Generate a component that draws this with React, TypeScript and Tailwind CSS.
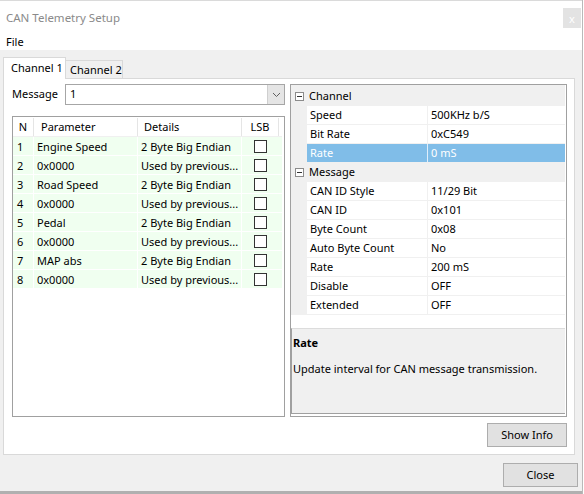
import React from 'react'

const rows = [
  { n: 1, name: 'Engine Speed', det: '2 Byte Big Endian' },
  { n: 2, name: '0x0000', det: 'Used by previous...' },
  { n: 3, name: 'Road Speed', det: '2 Byte Big Endian' },
  { n: 4, name: '0x0000', det: 'Used by previous...' },
  { n: 5, name: 'Pedal', det: '2 Byte Big Endian' },
  { n: 6, name: '0x0000', det: 'Used by previous...' },
  { n: 7, name: 'MAP abs', det: '2 Byte Big Endian' },
  { n: 8, name: '0x0000', det: 'Used by previous...' },
]

type Prop = { label: string; value: string; selected?: boolean }

const groups: { title: string; props: Prop[] }[] = [
  {
    title: 'Channel',
    props: [
      { label: 'Speed', value: '500KHz b/S' },
      { label: 'Bit Rate', value: '0xC549' },
      { label: 'Rate', value: '0 mS', selected: true },
    ],
  },
  {
    title: 'Message',
    props: [
      { label: 'CAN ID Style', value: '11/29 Bit' },
      { label: 'CAN ID', value: '0x101' },
      { label: 'Byte Count', value: '0x08' },
      { label: 'Auto Byte Count', value: 'No' },
      { label: 'Rate', value: '200 mS' },
      { label: 'Disable', value: 'OFF' },
      { label: 'Extended', value: 'OFF' },
    ],
  },
]

function MinusBox() {
  return (
    <svg width="9" height="9" viewBox="0 0 9 9" className="block">
      <rect x="0.5" y="0.5" width="8" height="8" fill="#fff" stroke="#8c8c8c" />
      <line x1="2" y1="4.5" x2="7" y2="4.5" stroke="#333" />
    </svg>
  )
}

function Button({ label, className }: { label: string; className?: string }) {
  return (
    <div
      className={
        'flex items-center justify-center h-[24px] bg-[#e1e1e1] border border-[#adadad] text-black ' +
        (className ?? '')
      }
    >
      {label}
    </div>
  )
}

export default function App() {
  return (
    <div
      className="w-[584px] h-[494px] bg-white overflow-hidden text-[11px] text-black whitespace-nowrap"
      style={{ fontFamily: '"Noto Sans", "Segoe UI", sans-serif' }}
    >
      <div className="w-[583px] h-[494px] flex flex-col border-r border-[#b9b9b9]">
        {/* Title bar */}
        <div className="h-[32px] bg-white border-t border-[#dadada] flex items-start justify-between">
          <div className="pl-[6px] pt-[8px] text-[#8a8a8a] text-[11.5px]">CAN Telemetry Setup</div>
          <div className="mt-[7px] mr-[1px] w-[18px] h-[20px] bg-[#e3e3e3] flex items-center justify-center text-white text-[11px] leading-none">
            x
          </div>
        </div>

        {/* Menu */}
        <div className="h-[18px] bg-white flex items-center pl-[6px] leading-none">File</div>

        {/* Body */}
        <div className="flex-1 bg-[#f0f0f0] flex flex-col pl-[3px] pr-[7px] pt-[7px]">
          {/* Tabs */}
          <div className="flex items-end h-[21px] relative z-10">
            <div className="w-[63px] h-[22px] bg-white border border-b-0 border-[#d9d9d9] flex items-center pl-[7px] -mb-[1px]">
              Channel 1
            </div>
            <div className="w-[57px] h-[18px] bg-[#f0f0f0] border border-l-0 border-b-0 border-[#d9d9d9] flex items-center pl-[4px] pt-[1px]">
              Channel 2
            </div>
          </div>

          {/* Tab panel */}
          <div className="h-[377px] bg-white border border-[#d9d9d9] flex flex-col pl-[8px] pr-[7px] pt-[5px]">
            <div className="flex gap-[5px]">
              {/* Left column */}
              <div className="w-[273px] flex flex-col">
                <div className="flex items-center h-[21px]">
                  <div className="w-[53px]">Message</div>
                  <div className="flex-1 h-[21px] border border-[#a6a6a6] flex items-stretch">
                    <div className="flex-1 flex items-center pl-[4px]">1</div>
                    <div className="w-[17px] bg-[#e5e5e5] border-l border-[#cfcfcf] flex items-center justify-center">
                      <svg width="9" height="6" viewBox="0 0 9 6">
                        <path d="M1 1 L4.5 4.5 L8 1" fill="none" stroke="#606060" strokeWidth="1" />
                      </svg>
                    </div>
                  </div>
                </div>

                {/* Grid */}
                <div className="mt-[11px] h-[301px] border border-[#a0a0a0] bg-white pr-[2px]">
                  <div className="flex h-[20px] border-b border-[#f0f0f0] pt-[1px]">
                    <div className="w-[21px] border-r border-[#e5e5e5] flex items-center justify-center">N</div>
                    <div className="w-[104px] border-r border-[#e5e5e5] flex items-center pl-[7px]">Parameter</div>
                    <div className="w-[104px] border-r border-[#e5e5e5] flex items-center pl-[6px]">Details</div>
                    <div className="w-[37px] border-r border-[#e5e5e5] flex items-center justify-center">LSB</div>
                  </div>
                  {rows.map((r) => (
                    <div key={r.n} className="flex h-[19px] border-b border-white bg-[#f0fff0]">
                      <div className="w-[21px] border-r border-white flex items-center pl-[4px] pt-[2px]">{r.n}</div>
                      <div className="w-[104px] border-r border-white flex items-center pl-[3px] pt-[2px]">{r.name}</div>
                      <div className="w-[104px] border-r border-white flex items-center pl-[3px] pt-[2px] overflow-hidden">
                        {r.det}
                      </div>
                      <div className="w-[37px] flex items-center justify-center">
                        <div className="w-[13px] h-[13px] border border-[#333] bg-white" />
                      </div>
                      <div className="flex-1" />
                    </div>
                  ))}
                </div>
              </div>

              {/* Property grid */}
              <div className="w-[277px] h-[333px] border border-[#a0a0a0] bg-white flex flex-col pr-[1px]">
                <div className="bg-[#f0f0f0] pt-[2px]">
                  {groups.map((g) => (
                    <div key={g.title}>
                      <div className="h-[19px] flex items-center border-b border-[#f0f0f0]">
                        <div className="w-[16px] flex items-center justify-center pl-[1px]">
                          <MinusBox />
                        </div>
                        <div className="pl-[2px]">{g.title}</div>
                      </div>
                      {g.props.map((p, i) => (
                        <div key={i} className="h-[19px] flex pl-[16px] border-b border-[#f0f0f0]">
                          <div
                            className={
                              'w-[121px] flex items-center pl-[3px] border-r ' +
                              (p.selected ? 'bg-[#80bde8] text-white border-[#dfeefb]' : 'bg-white border-[#f0f0f0]')
                            }
                          >
                            {p.label}
                          </div>
                          <div
                            className={
                              'flex-1 flex items-center pl-[3px] ' +
                              (p.selected ? 'bg-[#80bde8] text-white' : 'bg-white')
                            }
                          >
                            {p.value}
                          </div>
                        </div>
                      ))}
                    </div>
                  ))}
                </div>
                <div className="mt-auto mb-[2px] h-[86px] bg-[#f0f0f0] border-t border-[#dcdcdc] border-l border-l-[#a0a0a0] border-b border-b-[#a0a0a0] pl-[1px] pt-[5px]">
                  <div className="font-bold leading-[18px]">Rate</div>
                  <div className="mt-[8px] leading-[18px]">Update interval for CAN message transmission.</div>
                </div>
              </div>
            </div>

            <div className="flex justify-end mt-[6px]">
              <Button label="Show Info" className="w-[80px]" />
            </div>
          </div>

          <div className="flex justify-end mt-[8px]">
            <Button label="Close" className="w-[75px] -mr-[3px]" />
          </div>
        </div>
        <div className="h-[3px] bg-[#b0b0b0]" />
      </div>
    </div>
  )
}
